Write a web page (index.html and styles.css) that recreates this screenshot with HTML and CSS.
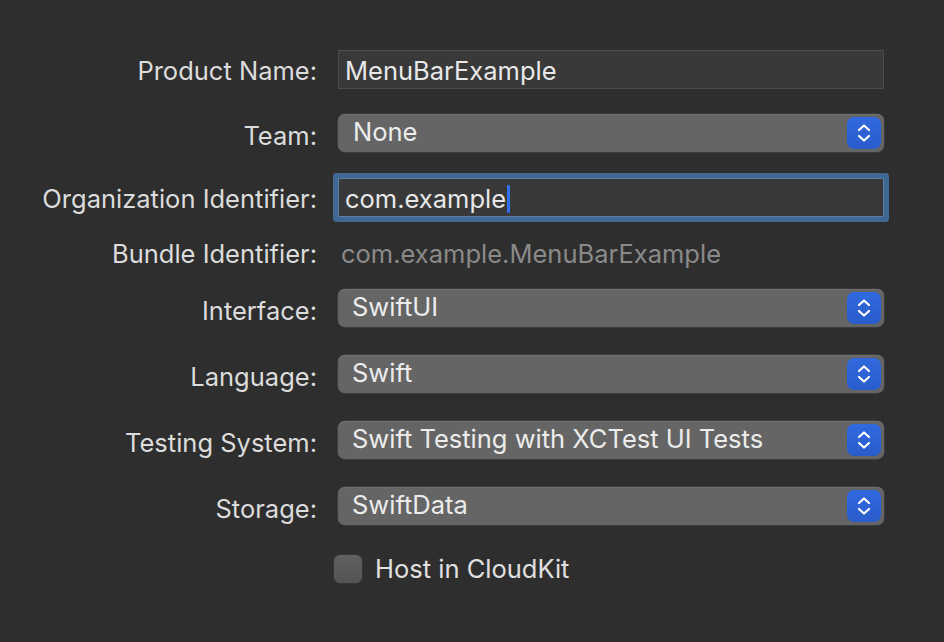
FILE: index.html
```html
<!DOCTYPE html>
<html>
<head>
<meta charset="utf-8">
<link rel="stylesheet" href="styles.css">
</head>
<body>
<div class="form">
  <div class="row r1">
    <div class="label">Product Name:</div>
    <div class="field"><span class="value">MenuBarExample</span></div>
  </div>
  <div class="row r2">
    <div class="label lp">Team:</div>
    <div class="popup"><span class="ptext pt-none">None</span><span class="stepper"><svg width="34" height="32" viewBox="0 0 34 32"><path d="M12 13 L17 8.5 L22 13 M12 19 L17 23.5 L22 19" fill="none" stroke="#fff" stroke-width="2.2" stroke-linecap="round" stroke-linejoin="round"/></svg></span></div>
  </div>
  <div class="row r3">
    <div class="label">Organization Identifier:</div>
    <div class="field focused"><span class="value">com.example</span><span class="caret"></span></div>
  </div>
  <div class="row r4">
    <div class="label">Bundle Identifier:</div>
    <div class="static">com.example.MenuBarExample</div>
  </div>
  <div class="row r5">
    <div class="label lp">Interface:</div>
    <div class="popup"><span class="ptext">SwiftUI</span><span class="stepper"><svg width="34" height="32" viewBox="0 0 34 32"><path d="M12 13 L17 8.5 L22 13 M12 19 L17 23.5 L22 19" fill="none" stroke="#fff" stroke-width="2.2" stroke-linecap="round" stroke-linejoin="round"/></svg></span></div>
  </div>
  <div class="row r6">
    <div class="label lp">Language:</div>
    <div class="popup"><span class="ptext">Swift</span><span class="stepper"><svg width="34" height="32" viewBox="0 0 34 32"><path d="M12 13 L17 8.5 L22 13 M12 19 L17 23.5 L22 19" fill="none" stroke="#fff" stroke-width="2.2" stroke-linecap="round" stroke-linejoin="round"/></svg></span></div>
  </div>
  <div class="row r6">
    <div class="label lp">Testing System:</div>
    <div class="popup"><span class="ptext">Swift Testing with XCTest UI Tests</span><span class="stepper"><svg width="34" height="32" viewBox="0 0 34 32"><path d="M12 13 L17 8.5 L22 13 M12 19 L17 23.5 L22 19" fill="none" stroke="#fff" stroke-width="2.2" stroke-linecap="round" stroke-linejoin="round"/></svg></span></div>
  </div>
  <div class="row r6">
    <div class="label lp">Storage:</div>
    <div class="popup"><span class="ptext">SwiftData</span><span class="stepper"><svg width="34" height="32" viewBox="0 0 34 32"><path d="M12 13 L17 8.5 L22 13 M12 19 L17 23.5 L22 19" fill="none" stroke="#fff" stroke-width="2.2" stroke-linecap="round" stroke-linejoin="round"/></svg></span></div>
  </div>
  <div class="row r9">
    <div class="label"></div>
    <label class="check"><span class="box"></span><span class="ctext">Host in CloudKit</span></label>
  </div>
</div>
</body>
</html>
```
FILE: styles.css
```css
html, body {
  margin: 0;
  padding: 0;
  background: #2e2e2e;
  width: 944px;
  height: 642px;
  overflow: hidden;
  font-family: "Inter", "Liberation Sans", sans-serif;
  font-size: 25.5px;
  color: #dedede;
}
.form {
  padding-top: 50px;
  display: flex;
  flex-direction: column;
}
.row {
  display: grid;
  grid-template-columns: 317px 546px;
  column-gap: 21px;
  align-items: center;
  line-height: 1;
}
.r1 { height: 39px; }
.r2 { height: 38px; margin-top: 25px; }
.r3 { height: 39px; margin-top: 26px; }
.r4 { height: 34px; margin-top: 19px; }
.r5 { height: 38px; margin-top: 19px; }
.r6 { height: 38px; margin-top: 28px; }
.r9 { height: 28px; margin-top: 30px; }
.label {
  text-align: right;
  color: #dcdcdc;
  white-space: nowrap;
  padding-top: 2px;
}
.lp { padding-top: 5px; }
.field {
  height: 39px;
  box-sizing: border-box;
  background: #393939;
  border: 1px solid #4b4b4b;
  border-top-color: #525252;
  display: flex;
  align-items: center;
  padding-left: 6px;
  padding-top: 2px;
  color: #e8e8e8;
}
.focused {
  box-shadow: 0 0 0 5px #3f6892;
  border-radius: 1px;
  border-color: #5a7fa6;
}
.caret {
  display: inline-block;
  width: 3px;
  height: 28px;
  background: #2f6ff0;
  border-radius: 1px;
  margin-left: 1px;
}
.static {
  color: #8a8a8a;
  padding-left: 3px;
  padding-top: 2px;
}
.popup {
  height: 38px;
  box-sizing: border-box;
  background: #656565;
  border-radius: 7px;
  box-shadow: 0 0 0 0.5px #4a4a4a, inset 0 1px 0 #6f6f6f;
  display: flex;
  align-items: center;
  justify-content: space-between;
  padding: 0 3px 0 14px;
  color: #ececec;
}
.ptext { padding-bottom: 2px; }
.pt-none { padding-left: 1px; }
.stepper {
  width: 34px;
  height: 32px;
  border-radius: 7px;
  background: linear-gradient(#3069df, #2a5ccb);
  display: flex;
}
.check {
  display: flex;
  align-items: center;
  margin-left: -4px;
}
.box {
  width: 28px;
  height: 28px;
  box-sizing: border-box;
  border-radius: 6px;
  background: linear-gradient(#606060, #545454);
  box-shadow: 0 0 0 0.5px #3d3d3d;
}
.ctext {
  margin-left: 13px;
  color: #e0e0e0;
  padding-top: 0;
}
```
